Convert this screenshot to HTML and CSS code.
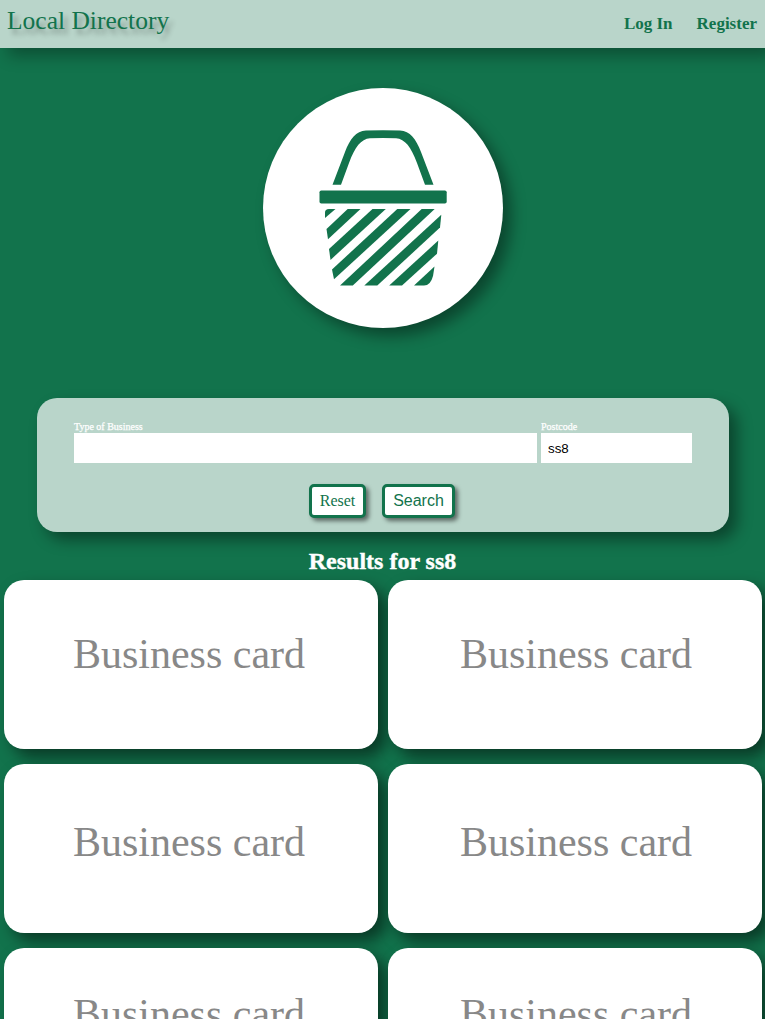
FILE: index.html
```html
<!DOCTYPE html>
<html lang="en">
<head>
<meta charset="utf-8">
<title>Local Directory</title>
<link rel="stylesheet" href="styles.css">
</head>
<body>
<header class="navbar">
  <a class="brand">Local Directory</a>
  <nav class="links"><a>Log In</a><a>Register</a></nav>
</header>
<main>
  <div class="logo">
    <svg width="240" height="240" viewBox="263 88 240 240" fill="#12734c">
      <path d="M332.5 184.800L345 152C350 139 356 131 366 130.500Q383 129.800 400 130.500C410 131 416 139 421 152L433.500 184.800H425L417 163C411 147 405 139 396 138.300Q383 137.700 370 138.300C361 139 355 147 349 163L341 184.800Z"/>
      <rect x="319.5" y="190.5" width="127.2" height="13" rx="1.8"/>
      <path d="M325 218V212.500Q325 209 329 209H335.500Z"/>
      <path d="M326.500 229L347.700 209H360.500L328 239.300Z"/>
      <path d="M329 249L372.500 209H385.800L330.500 259.900Z"/>
      <path d="M332 269.500L397.300 209H410.500L334 279.300Z"/>
      <path d="M340 285.600L421.700 209H434.700L352.800 285.600Z"/>
      <path d="M364.300 285.600L441.300 214.800L440 227.500L377.300 285.600Z"/>
      <path d="M389.200 285.600L438.300 240.500L437 253.700L402 285.600Z"/>
      <path d="M414 285.600L434.500 266.500L433 276Q430.500 285.600 424 285.600Z"/>
    </svg>
  </div>
  <form class="search">
    <div class="fields">
      <label class="business">Type of Business<input type="text"></label>
      <label class="postcode">Postcode<input type="text" value="ss8"></label>
    </div>
    <div class="actions">
      <a class="button">Reset</a>
      <button class="button submit" type="button">Search</button>
    </div>
  </form>
  <h2 class="title">Results for ss8</h2>
  <section class="results">
    <article class="card">Business card</article>
    <article class="card">Business card</article>
    <article class="card lower">Business card</article>
    <article class="card lower">Business card</article>
    <article class="card third">Business card</article>
    <article class="card third">Business card</article>
  </section>
</main>
</body>
</html>
```
FILE: styles.css
```css
* { box-sizing: border-box; }
html { overflow: hidden; }
body {
  margin: 0;
  height: 1019px;
  overflow: hidden;
  background: #12734c;
  color: #12734c;
  font-family: "Liberation Serif", "Times New Roman", serif;
}
.navbar {
  display: flex;
  justify-content: space-between;
  height: 48px;
  padding: 0 8px 0 7px;
  background: #b9d5ca;
  box-shadow: 8px 8px 15px rgba(0, 0, 0, .3);
}
.brand {
  padding-top: 6px;
  font-size: 25.5px;
  line-height: 29px;
  text-shadow: 4px 5px 5px rgba(0, 0, 0, .3);
}
.links {
  display: flex;
  gap: 24px;
  padding-top: 14px;
  font-size: 17px;
  font-weight: bold;
  line-height: 20px;
}
.logo {
  width: 240px;
  height: 240px;
  margin: 40px auto 70px;
  border-radius: 50%;
  background: #fff;
  box-shadow: 8px 8px 15px rgba(0, 0, 0, .4);
}
.logo svg { display: block; }
.search {
  width: 692px;
  height: 134px;
  margin: 0 auto 0 37px;
  padding: 23px 37px 0;
  border-radius: 20px;
  background: #b9d5ca;
  box-shadow: 8px 8px 15px rgba(0, 0, 0, .4);
}
.fields { display: flex; gap: 4px; }
.fields label {
  color: #fff;
  font-size: 10px;
  line-height: 12px;
  -webkit-text-stroke: .25px #fff;
}
.business { width: 463px; }
.postcode { width: 151px; }
.fields input {
  display: block;
  width: 100%;
  height: 30px;
  padding: 0 7px;
  border: 0;
  background: #fff;
  color: #000;
  font: 13.33px/28px "Liberation Sans", Arial, sans-serif;
  -webkit-text-stroke: 0;
}
.actions {
  display: flex;
  justify-content: center;
  gap: 16px;
  margin-top: 21px;
  padding-right: 2px;
}
.button {
  width: 57px;
  height: 34px;
  padding: 0;
  border: 3px solid #12734c;
  border-radius: 5px;
  background: #fff;
  color: #12734c;
  font-size: 16px;
  line-height: 27px;
  text-align: center;
  box-shadow: 3px 3px 4px rgba(0, 0, 0, .5);
}
.submit {
  width: 73px;
  padding-bottom: 2px;
  font-family: "Liberation Sans", Arial, sans-serif;
}
.title {
  margin: 15px 0 5px;
  font-size: 24px;
  line-height: 28px;
  text-align: center;
  color: #fff;
  -webkit-text-stroke: .4px #fff;
}
.results {
  display: grid;
  grid-template-columns: 374px 374px;
  gap: 15px 10px;
  padding-left: 4px;
}
.card {
  height: 169px;
  padding: 50px 0 0 2px;
  border-radius: 20px;
  background: #fff;
  color: #888;
  font-size: 42px;
  line-height: 48px;
  text-align: center;
  box-shadow: 8px 8px 15px rgba(0, 0, 0, .5);
}
.card:nth-child(odd) { padding-right: 6px; }
.lower { padding-top: 54px; }
.third { padding-top: 42px; }
```
